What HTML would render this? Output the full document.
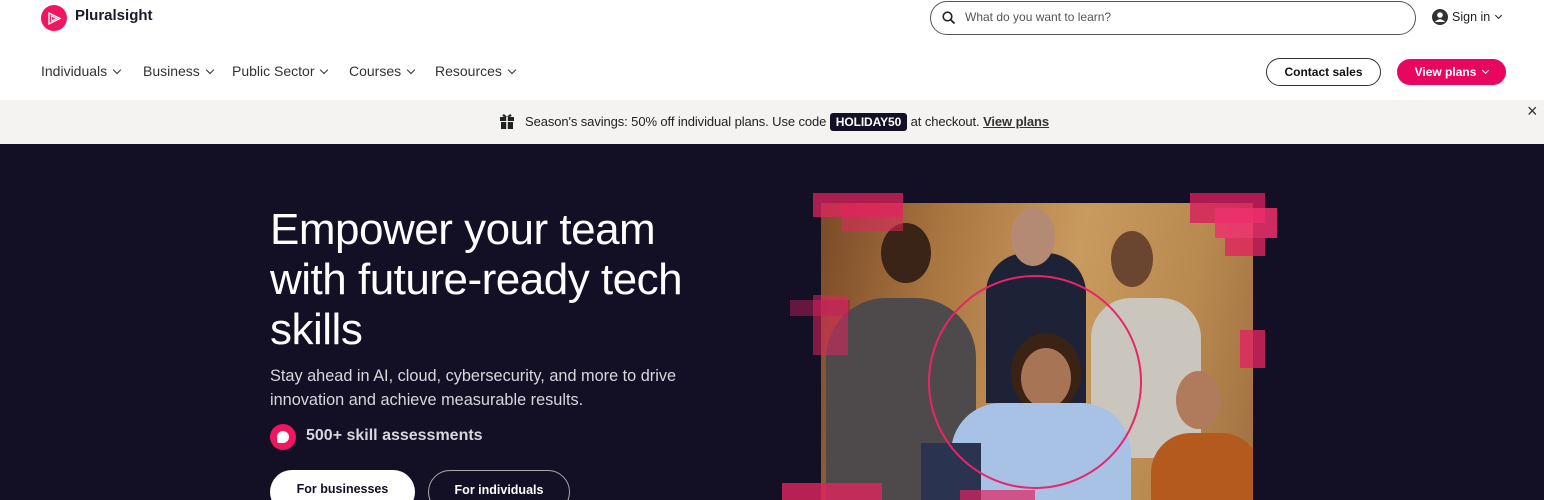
<!DOCTYPE html>
<html style="overflow:hidden;height:500px"><head><meta charset="utf-8"><style>
*{margin:0;padding:0;box-sizing:border-box}
body{width:1544px;height:500px;overflow:hidden;font-family:"Liberation Sans",sans-serif;background:#fff;position:relative}
.a{position:absolute}
.nav{font-size:14px;color:#333;top:63px}
.chev{display:inline-block;width:6px;height:6px;border-right:1.6px solid currentColor;border-bottom:1.6px solid currentColor;transform:rotate(45deg);margin-left:7px;position:relative;top:-3px}
.btn{border-radius:14px;font-size:13px;font-weight:bold;text-align:center}
.sq{position:absolute;background:#e0245f}
</style></head><body>
<div class="a" style="left:41px;top:5px;width:26px;height:26px;border-radius:50%;background:#f0155f"></div>
<svg class="a" style="left:47px;top:11px" width="15" height="15" viewBox="0 0 15 15"><path d="M2 2 L13 7.5 L2 13 Z" fill="none" stroke="#fff" stroke-width="1.3"/><path d="M4.5 5 L9.5 7.5 L4.5 10 Z" fill="none" stroke="#fff" stroke-width="1.1"/></svg>
<div class="a" style="left:75px;top:7px;font-size:15px;font-weight:bold;color:#1a1a2a">Pluralsight</div>
<div class="a" style="left:930px;top:1px;width:486px;height:34px;border:1px solid #555;border-radius:17px"></div>
<svg class="a" style="left:942px;top:11px" width="14" height="14"><circle cx="5.5" cy="5.5" r="4.3" fill="none" stroke="#222" stroke-width="1.6"/><path d="M8.6 8.6 L12.5 12.5" stroke="#222" stroke-width="1.8"/></svg>
<div class="a" style="left:965px;top:10px;font-size:12px;color:#555">What do you want to learn?</div>
<svg class="a" style="left:1432px;top:9px" width="16" height="16"><circle cx="8" cy="8" r="8" fill="#333"/><circle cx="8" cy="6" r="2.8" fill="#fff"/><path d="M3 13 Q8 7.5 13 13" fill="#fff"/></svg>
<div class="a" style="left:1452px;top:10px;font-size:12.5px;color:#222">Sign in<span class="chev" style="width:5px;height:5px;margin-left:6px"></span></div>
<div class="a nav" style="left:41px">Individuals<span class="chev"></span></div>
<div class="a nav" style="left:143px">Business<span class="chev"></span></div>
<div class="a nav" style="left:232px">Public Sector<span class="chev"></span></div>
<div class="a nav" style="left:349px">Courses<span class="chev"></span></div>
<div class="a nav" style="left:435px">Resources<span class="chev"></span></div>
<div class="a btn" style="left:1266px;top:58px;width:115px;height:28px;border:1px solid #333;line-height:26px;color:#111;font-size:12px">Contact sales</div>
<div class="a btn" style="left:1397px;top:59px;width:109px;height:26px;background:#e8065f;color:#fff;line-height:26px;font-size:12px">View plans<span class="chev" style="width:5px;height:5px"></span></div>
<div class="a" style="left:0;top:100px;width:1544px;height:44px;background:#f4f3f1"></div>
<svg class="a" style="left:500px;top:113px" width="14" height="16"><rect x="0" y="4" width="14" height="4" fill="#222"/><rect x="1" y="9" width="12" height="7" fill="#222"/><rect x="6.2" y="4" width="1.6" height="12" fill="#f4f3f1"/><path d="M7 4 Q3 -1 2.5 3 Q3 4 7 4 Q11 -1 11.5 3 Q11 4 7 4" fill="#222"/></svg>
<div class="a" style="left:525px;top:113px;font-size:13px;color:#222;white-space:nowrap;letter-spacing:-0.1px">Season's savings: 50% off individual plans. Use code <span style="display:inline-block;background:#130f25;color:#fff;font-weight:bold;border-radius:3px;padding:2px 6px;font-size:12px">HOLIDAY50</span> at checkout. <b style="text-decoration:underline;color:#333">View plans</b></div>
<div class="a" style="left:1527px;top:101px;font-size:18px;color:#333">×</div>
<div class="a" style="left:0;top:144px;width:1544px;height:356px;background:#130f25;overflow:hidden">
<div class="a" style="left:270px;top:61px;font-size:44px;line-height:50px;color:#fff;letter-spacing:-0.5px">Empower your team<br>with future-ready tech<br>skills</div>
<div class="a" style="left:270px;top:220px;font-size:16.3px;line-height:24px;color:#d8d6de">Stay ahead in AI, cloud, cybersecurity, and more to drive<br>innovation and achieve measurable results.</div>
<div class="a" style="left:270px;top:280px;width:26px;height:26px;border-radius:50%;background:#f0155f"></div>
<div class="a" style="left:277px;top:287px;width:12px;height:12px;border-radius:6px 6px 6px 2px;background:#fff"></div>
<div class="a" style="left:306px;top:283px;font-size:16px;font-weight:bold;color:#d8d6de">500+ skill assessments</div>
<div class="a" style="left:270px;top:326px;width:145px;height:44px;border-radius:22px;background:#fff;font-size:12.5px;font-weight:bold;color:#130f25;text-align:center;padding-top:12px">For businesses</div>
<div class="a" style="left:428px;top:326px;width:142px;height:44px;border-radius:22px;border:1px solid #aaa;font-size:12.5px;font-weight:bold;color:#fff;text-align:center;padding-top:12px">For individuals</div>
</div>
<div class="a" style="left:821px;top:203px;width:432px;height:297px;overflow:hidden;background:linear-gradient(100deg,#7a4a28 0%,#a8743f 25%,#c99a5e 55%,#b98a50 80%,#a07040 100%)">
 <div class="a" style="left:5px;top:95px;width:150px;height:210px;border-radius:60px 60px 0 0;background:#4e4a4c"></div>
 <div class="a" style="left:60px;top:20px;width:50px;height:60px;border-radius:50%;background:#3a2418"></div>
 <div class="a" style="left:165px;top:50px;width:100px;height:150px;border-radius:40px 40px 0 0;background:#1d2236"></div>
 <div class="a" style="left:190px;top:5px;width:44px;height:58px;border-radius:50%;background:#b48a74"></div>
 <div class="a" style="left:270px;top:95px;width:110px;height:160px;border-radius:40px 40px 10px 10px;background:#cac5bd"></div>
 <div class="a" style="left:290px;top:28px;width:42px;height:56px;border-radius:50%;background:#6a4630"></div>
 <div class="a" style="left:190px;top:130px;width:70px;height:80px;border-radius:50%;background:#3a2214"></div>
 <div class="a" style="left:200px;top:145px;width:50px;height:60px;border-radius:50%;background:#a87456"></div>
 <div class="a" style="left:130px;top:200px;width:180px;height:110px;border-radius:50px 50px 0 0;background:#a8c2e6"></div>
 <div class="a" style="left:330px;top:230px;width:110px;height:80px;border-radius:40px 40px 0 0;background:#b45a1e"></div>
 <div class="a" style="left:355px;top:168px;width:45px;height:58px;border-radius:50%;background:#b07a5c"></div>
 <div class="a" style="left:100px;top:240px;width:60px;height:60px;background:#2a3450"></div>
</div>
<div class="a" style="left:928px;top:275px;width:214px;height:214px;border-radius:50%;border:2px solid #e8246a"></div>
<div class="sq" style="left:813px;top:193px;width:90px;height:24px;opacity:.75"></div>
<div class="sq" style="left:841px;top:203px;width:62px;height:28px;opacity:.55"></div>
<div class="sq" style="left:1190px;top:193px;width:75px;height:30px;opacity:.8;background:#d81d5e"></div>
<div class="sq" style="left:1215px;top:208px;width:62px;height:30px;opacity:.85;background:#f0306e"></div>
<div class="sq" style="left:1225px;top:238px;width:40px;height:18px;opacity:.8"></div>
<div class="sq" style="left:790px;top:300px;width:60px;height:16px;opacity:.6;background:#a01a52"></div>
<div class="sq" style="left:813px;top:295px;width:35px;height:60px;opacity:.55"></div>
<div class="sq" style="left:1240px;top:330px;width:25px;height:38px;opacity:.8"></div>
<div class="sq" style="left:782px;top:483px;width:100px;height:17px;opacity:.8"></div>
<div class="sq" style="left:960px;top:490px;width:75px;height:10px;opacity:.7"></div>
</body></html>
